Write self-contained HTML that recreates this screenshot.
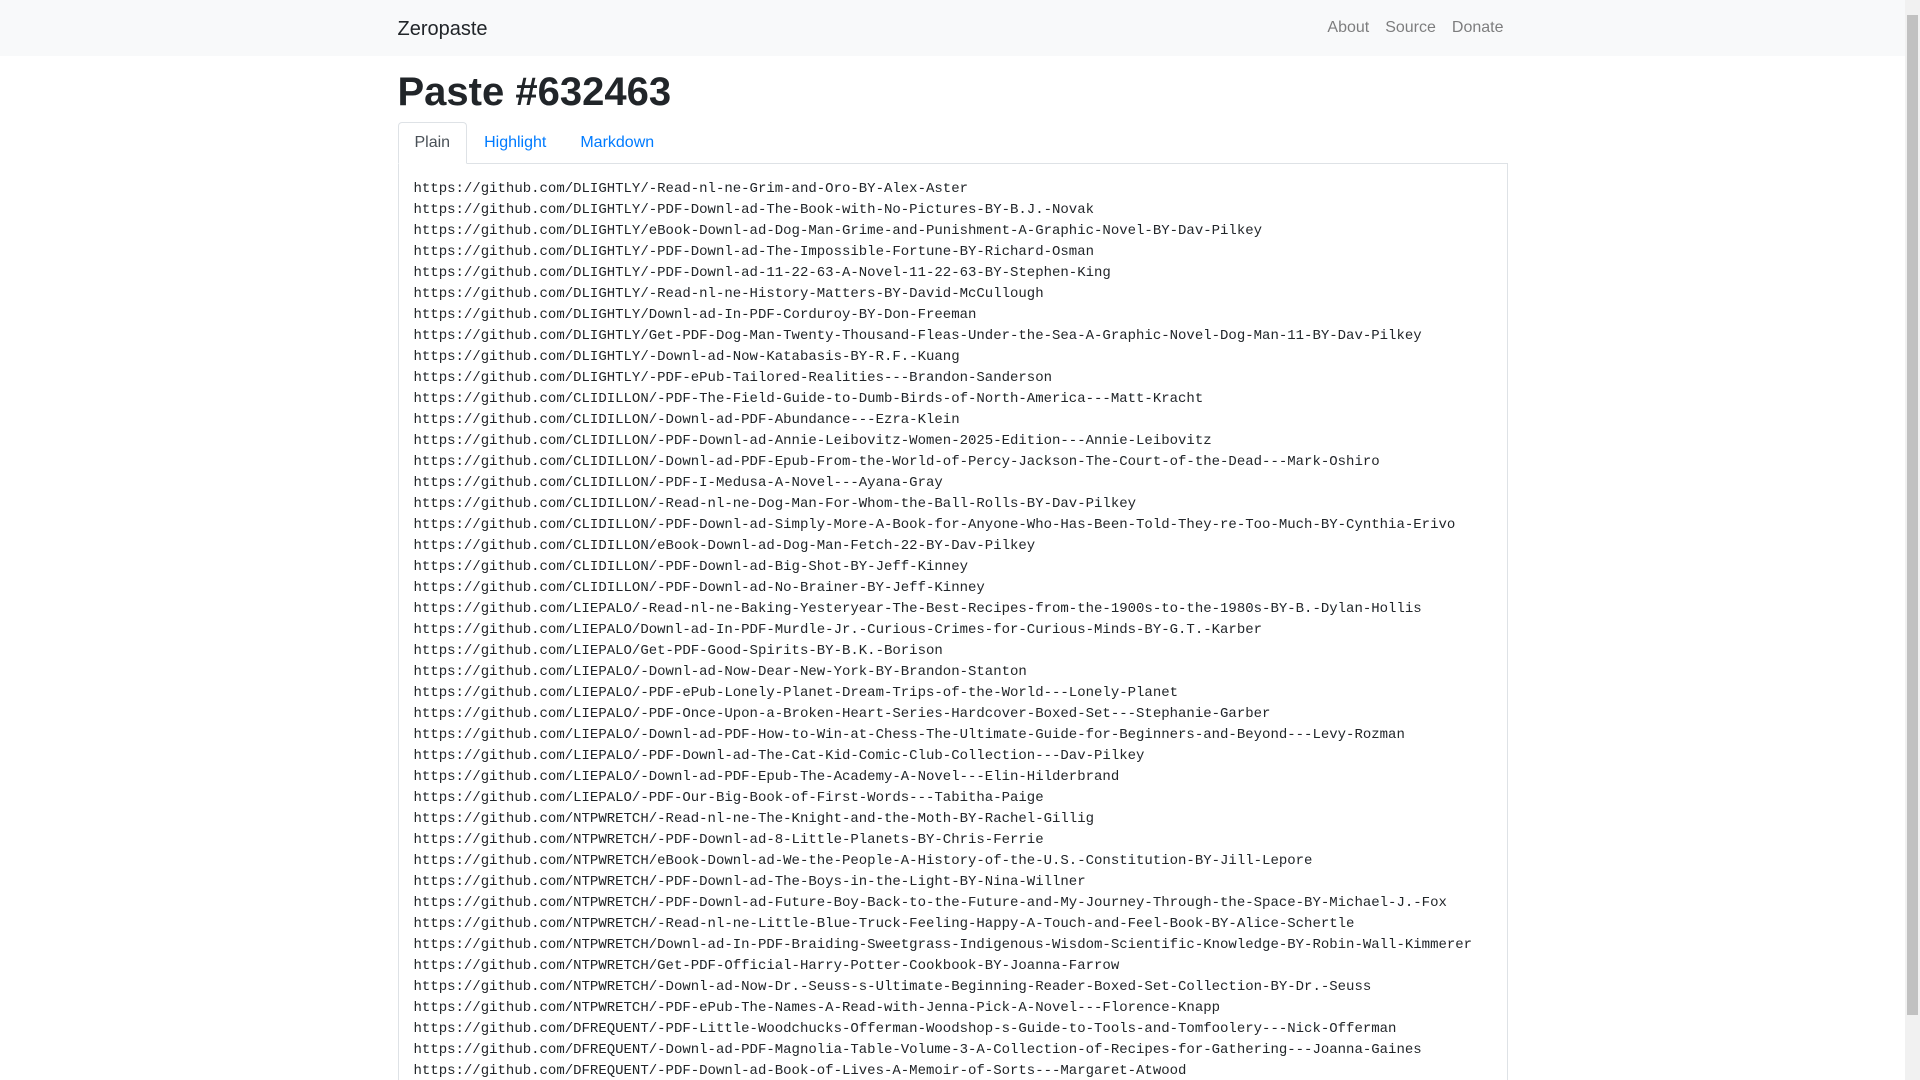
<!DOCTYPE html>
<html><head><meta charset="utf-8"><style>
html,body{margin:0;padding:0;height:1080px;overflow:hidden}
body{font-family:"Liberation Sans",sans-serif;color:#212529;background:#fff;font-size:16px;line-height:1.5;width:1920px;position:relative}
.sb{position:absolute;right:0;top:0;width:15px;height:1080px;background:#f1f1f1}
.sb div{position:absolute;left:2px;right:2px;top:15px;height:1000px;background:#c1c1c1}
.wrap{width:1905px}
.nav{background:#f8f9fa;height:56px}
.c{width:1110px;margin:0 auto;position:relative}
.brand{position:absolute;left:0;top:14px;font-size:20px;line-height:30px}
.links{position:absolute;right:2px;top:16px;font-size:16px;line-height:24px;color:rgba(0,0,0,.5)}
.links span{margin-left:12px;padding:0 2px}
h1{margin:12px 0 6px;font-size:40px;line-height:48px;font-weight:bold;font-family:"Liberation Sans",sans-serif}
.tabs{height:41px;border-bottom:1px solid #dee2e6;display:flex;position:relative}
.tab{padding:8px 16px;line-height:24px;color:#007bff;border:1px solid transparent;border-radius:4px 4px 0 0;margin-bottom:-1px}
.tab.a{color:#495057;background:#fff;border-color:#dee2e6 #dee2e6 #fff}
.box{border:1px solid #dee2e6;border-top:0;height:916px;overflow:hidden}
pre{margin:0;padding:15px 15px;font-family:"Liberation Mono",monospace;font-size:14px;line-height:21px;color:#212529}
</style></head><body>
<div class="wrap">
<div class="nav"><div class="c"><div class="brand">Zeropaste</div><div class="links"><span>About</span><span>Source</span><span>Donate</span></div></div></div>
<div class="c">
<h1>Paste #632463</h1>
<div class="tabs"><div class="tab a">Plain</div><div class="tab">Highlight</div><div class="tab">Markdown</div></div>
<div class="box"><pre>https://github.com/DLIGHTLY/-Read-nl-ne-Grim-and-Oro-BY-Alex-Aster
https://github.com/DLIGHTLY/-PDF-Downl-ad-The-Book-with-No-Pictures-BY-B.J.-Novak
https://github.com/DLIGHTLY/eBook-Downl-ad-Dog-Man-Grime-and-Punishment-A-Graphic-Novel-BY-Dav-Pilkey
https://github.com/DLIGHTLY/-PDF-Downl-ad-The-Impossible-Fortune-BY-Richard-Osman
https://github.com/DLIGHTLY/-PDF-Downl-ad-11-22-63-A-Novel-11-22-63-BY-Stephen-King
https://github.com/DLIGHTLY/-Read-nl-ne-History-Matters-BY-David-McCullough
https://github.com/DLIGHTLY/Downl-ad-In-PDF-Corduroy-BY-Don-Freeman
https://github.com/DLIGHTLY/Get-PDF-Dog-Man-Twenty-Thousand-Fleas-Under-the-Sea-A-Graphic-Novel-Dog-Man-11-BY-Dav-Pilkey
https://github.com/DLIGHTLY/-Downl-ad-Now-Katabasis-BY-R.F.-Kuang
https://github.com/DLIGHTLY/-PDF-ePub-Tailored-Realities---Brandon-Sanderson
https://github.com/CLIDILLON/-PDF-The-Field-Guide-to-Dumb-Birds-of-North-America---Matt-Kracht
https://github.com/CLIDILLON/-Downl-ad-PDF-Abundance---Ezra-Klein
https://github.com/CLIDILLON/-PDF-Downl-ad-Annie-Leibovitz-Women-2025-Edition---Annie-Leibovitz
https://github.com/CLIDILLON/-Downl-ad-PDF-Epub-From-the-World-of-Percy-Jackson-The-Court-of-the-Dead---Mark-Oshiro
https://github.com/CLIDILLON/-PDF-I-Medusa-A-Novel---Ayana-Gray
https://github.com/CLIDILLON/-Read-nl-ne-Dog-Man-For-Whom-the-Ball-Rolls-BY-Dav-Pilkey
https://github.com/CLIDILLON/-PDF-Downl-ad-Simply-More-A-Book-for-Anyone-Who-Has-Been-Told-They-re-Too-Much-BY-Cynthia-Erivo
https://github.com/CLIDILLON/eBook-Downl-ad-Dog-Man-Fetch-22-BY-Dav-Pilkey
https://github.com/CLIDILLON/-PDF-Downl-ad-Big-Shot-BY-Jeff-Kinney
https://github.com/CLIDILLON/-PDF-Downl-ad-No-Brainer-BY-Jeff-Kinney
https://github.com/LIEPALO/-Read-nl-ne-Baking-Yesteryear-The-Best-Recipes-from-the-1900s-to-the-1980s-BY-B.-Dylan-Hollis
https://github.com/LIEPALO/Downl-ad-In-PDF-Murdle-Jr.-Curious-Crimes-for-Curious-Minds-BY-G.T.-Karber
https://github.com/LIEPALO/Get-PDF-Good-Spirits-BY-B.K.-Borison
https://github.com/LIEPALO/-Downl-ad-Now-Dear-New-York-BY-Brandon-Stanton
https://github.com/LIEPALO/-PDF-ePub-Lonely-Planet-Dream-Trips-of-the-World---Lonely-Planet
https://github.com/LIEPALO/-PDF-Once-Upon-a-Broken-Heart-Series-Hardcover-Boxed-Set---Stephanie-Garber
https://github.com/LIEPALO/-Downl-ad-PDF-How-to-Win-at-Chess-The-Ultimate-Guide-for-Beginners-and-Beyond---Levy-Rozman
https://github.com/LIEPALO/-PDF-Downl-ad-The-Cat-Kid-Comic-Club-Collection---Dav-Pilkey
https://github.com/LIEPALO/-Downl-ad-PDF-Epub-The-Academy-A-Novel---Elin-Hilderbrand
https://github.com/LIEPALO/-PDF-Our-Big-Book-of-First-Words---Tabitha-Paige
https://github.com/NTPWRETCH/-Read-nl-ne-The-Knight-and-the-Moth-BY-Rachel-Gillig
https://github.com/NTPWRETCH/-PDF-Downl-ad-8-Little-Planets-BY-Chris-Ferrie
https://github.com/NTPWRETCH/eBook-Downl-ad-We-the-People-A-History-of-the-U.S.-Constitution-BY-Jill-Lepore
https://github.com/NTPWRETCH/-PDF-Downl-ad-The-Boys-in-the-Light-BY-Nina-Willner
https://github.com/NTPWRETCH/-PDF-Downl-ad-Future-Boy-Back-to-the-Future-and-My-Journey-Through-the-Space-BY-Michael-J.-Fox
https://github.com/NTPWRETCH/-Read-nl-ne-Little-Blue-Truck-Feeling-Happy-A-Touch-and-Feel-Book-BY-Alice-Schertle
https://github.com/NTPWRETCH/Downl-ad-In-PDF-Braiding-Sweetgrass-Indigenous-Wisdom-Scientific-Knowledge-BY-Robin-Wall-Kimmerer
https://github.com/NTPWRETCH/Get-PDF-Official-Harry-Potter-Cookbook-BY-Joanna-Farrow
https://github.com/NTPWRETCH/-Downl-ad-Now-Dr.-Seuss-s-Ultimate-Beginning-Reader-Boxed-Set-Collection-BY-Dr.-Seuss
https://github.com/NTPWRETCH/-PDF-ePub-The-Names-A-Read-with-Jenna-Pick-A-Novel---Florence-Knapp
https://github.com/DFREQUENT/-PDF-Little-Woodchucks-Offerman-Woodshop-s-Guide-to-Tools-and-Tomfoolery---Nick-Offerman
https://github.com/DFREQUENT/-Downl-ad-PDF-Magnolia-Table-Volume-3-A-Collection-of-Recipes-for-Gathering---Joanna-Gaines
https://github.com/DFREQUENT/-PDF-Downl-ad-Book-of-Lives-A-Memoir-of-Sorts---Margaret-Atwood
https://github.com/DFREQUENT/-Read-nl-ne-The-Wild-Robot-BY-Peter-Brown
</pre></div>
</div>
</div>
<div class="sb"><div></div></div>
</body></html>
